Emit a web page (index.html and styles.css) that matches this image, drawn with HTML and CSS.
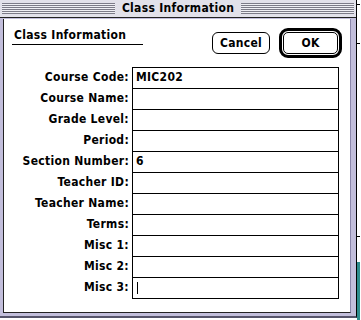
FILE: index.html
```html
<html>

<head>
  <title>Class Information</title>
  <link rel="stylesheet" href="styles.css">
</head>

<body>
<div class="desk">
  <div class="window">
    <div class="titlebar">
      <div class="stripes"></div>
      <div class="wintitle">Class Information</div>
      <div class="stripes"></div>
    </div>
    <div class="frame">
      <div class="content">
        <div class="top">
          <div class="heading">Class Information</div>
          <div class="buttons">
            <div class="btn">Cancel</div>
            <div class="ring"><div class="btn">OK</div></div>
          </div>
        </div>

        <div class="form">
          <div class="label">Course Code:</div>
          <div class="field">MIC202</div>
          <div class="label">Course Name:</div>
          <div class="field"></div>
          <div class="label">Grade Level:</div>
          <div class="field"></div>
          <div class="label">Period:</div>
          <div class="field"></div>
          <div class="label">Section Number:</div>
          <div class="field">6</div>
          <div class="label">Teacher ID:</div>
          <div class="field"></div>
          <div class="label">Teacher Name:</div>
          <div class="field"></div>
          <div class="label">Terms:</div>
          <div class="field"></div>
          <div class="label">Misc 1:</div>
          <div class="field"></div>
          <div class="label">Misc 2:</div>
          <div class="field"></div>
          <div class="label">Misc 3:</div>
          <div class="field last"><span class="caret"></span></div>
        </div>
      </div>
    </div>
  </div>
  <div class="behind"></div>
</div>
</body>
</html>
```

FILE: styles.css
```css
html, body {
  margin: 0px;
  padding: 0px;
  background: #fff;
  color: #000;
  font: bold 12px "DejaVu Sans", Verdana, sans-serif;
  font-stretch: condensed;
  letter-spacing: 0.3px;
}

.desk { display: flex; height: 320px; }

.window {
  width: 357px; height: 318px;
  box-sizing: border-box;
  display: flex; flex-direction: column;
  background: #c2bedb;
  border-right: 1px solid #000;
  border-bottom: 2px solid #55546a;
}

/* right strip: the window behind */
.behind {
  width: 3px; height: 320px;
  background:
    linear-gradient(#000, #000) 0 4px / 3px 1px no-repeat,
    linear-gradient(#000, #000) 0 43px / 3px 1px no-repeat,
    linear-gradient(#000, #000) 0 236px / 3px 1px no-repeat,
    linear-gradient(#fff 0 262px, #2e8c8c 262px);
}

.titlebar {
  height: 17px;
  display: flex; align-items: center;
  padding: 0 2px;
  background: #e2e1ea;
  border-bottom: 1px solid #222;
}
.stripes {
  flex: 1; height: 11px;
  background: repeating-linear-gradient(to bottom, #7c7b88 0 1px, #efeff4 1px 2px);
}
.wintitle { padding: 0 7px; line-height: 17px; }

.frame { flex: 1; padding: 1px 5px 3px 3px; display: flex; }
.content {
  flex: 1;
  background: #fff;
  border-left: 1px solid #222;
  border-right: 1px solid #8a86aa;
  border-bottom: 1px solid #222;
}

.top { height: 48px; display: flex; justify-content: space-between; align-items: flex-start; }
.heading {
  margin: 10px 0 0 8px;
  width: 129px;
  padding: 0 0 2px 2px;
  line-height: 13px;
  border-bottom: 1px solid #000;
}

.buttons { display: flex; align-items: center; gap: 9px; margin: 9px 8px 0 0; }
.btn {
  height: 22px; box-sizing: border-box;
  border: 1px solid #000; border-radius: 6px;
  line-height: 20px; text-align: center;
  width: 58px;
}
.ring { border: 3px solid #000; border-radius: 9px; padding: 1px; }
.ring .btn { width: 55px; border-radius: 5px; }

.form { display: grid; grid-template-columns: 125px 207px; column-gap: 3px; }
.label { text-align: right; line-height: 21px; height: 21px; white-space: nowrap; }
.field {
  height: 21px; box-sizing: border-box;
  border: 1px solid #000; border-bottom: none;
  padding-left: 3px;
  line-height: 18px;
}
.field.last { height: 22px; border-bottom: 1px solid #000; }
.caret { display: block; width: 1px; height: 12px; margin: 4px 0 0 1px; background: #000; }
```
